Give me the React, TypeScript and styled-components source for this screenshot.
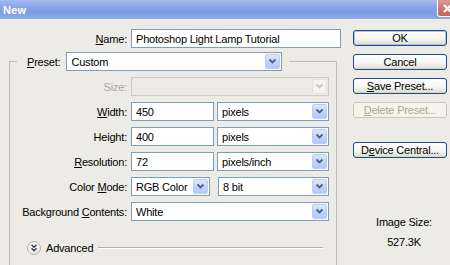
import React from "react";
import styled, { createGlobalStyle } from "styled-components";

const GlobalStyle = createGlobalStyle`
  html, body {
    margin: 0;
    padding: 0;
    width: 450px;
    height: 265px;
    overflow: hidden;
    background: #ecebe5;
  }
  body {
    font-family: "Liberation Sans", Arial, sans-serif;
    font-size: 11px;
    letter-spacing: -0.2px;
    color: #000;
  }
`;

const Window = styled.div`
  width: 450px;
  height: 265px;
  display: flex;
  flex-direction: column;
  overflow: hidden;
  background: #ecebe5;
`;

const TitleBar = styled.div`
  height: 19px;
  flex: none;
  display: flex;
  align-items: center;
  justify-content: space-between;
  overflow: hidden;
  padding-left: 3px;
  background: linear-gradient(180deg, #a3bbef 0%, #8aa5e8 35%, #7e9ce3 65%, #90aae9 100%);
`;

const Title = styled.span`
  color: #fff;
  font-weight: bold;
  font-size: 11px;
  letter-spacing: 0.2px;
`;

const CloseBox = styled.div`
  width: 21px;
  height: 17px;
  margin-right: -8px;
  align-self: flex-start;
  border: 1px solid #fff;
  border-top: none;
  border-radius: 0 0 0 3px;
  box-sizing: border-box;
  background: linear-gradient(180deg, #d99a90 0%, #c9776c 60%, #c06a60 100%);
  display: flex;
  align-items: center;
  justify-content: center;
`;

const Body = styled.div`
  flex: 1;
  display: flex;
  flex-direction: row;
  min-height: 0;
`;

const LeftCol = styled.div`
  width: 340px;
  flex: none;
  display: flex;
  flex-direction: column;
  padding-top: 10px;
`;

const Row = styled.div<{ $indent?: number }>`
  display: grid;
  grid-template-columns: 117px auto;
  column-gap: 4px;
  align-items: center;
  padding-left: ${(p) => p.$indent ?? 0}px;
  height: 19px;
`;

const Label = styled.label<{ $disabled?: boolean }>`
  text-align: right;
  white-space: nowrap;
  color: ${(p) => (p.$disabled ? "#aca899" : "#000")};
`;

const Fields = styled.div<{ $gap?: number }>`
  display: flex;
  gap: ${(p) => p.$gap ?? 3}px;
  align-items: center;
`;

const TextInput = styled.div<{ $w: number }>`
  width: ${(p) => p.$w}px;
  height: 19px;
  box-sizing: border-box;
  border: 1px solid #7f9db9;
  background: #fff;
  padding-left: 4px;
  display: flex;
  align-items: center;
  white-space: nowrap;
  overflow: hidden;
`;

const SelectBox = styled.div<{ $w: number; $disabled?: boolean }>`
  width: ${(p) => p.$w}px;
  height: 19px;
  box-sizing: border-box;
  border: 1px solid ${(p) => (p.$disabled ? "#cfcdc2" : "#7f9db9")};
  background: ${(p) => (p.$disabled ? "#ecebe5" : "#fff")};
  padding-left: 4px;
  display: flex;
  align-items: center;
  justify-content: space-between;
  white-space: nowrap;
  overflow: hidden;
`;

const ArrowBtn = styled.div<{ $disabled?: boolean }>`
  width: 15px;
  height: 15px;
  margin-right: 1px;
  box-sizing: border-box;
  border-radius: 2px;
  display: flex;
  align-items: center;
  justify-content: center;
  border: 1px solid ${(p) => (p.$disabled ? "#e3e2da" : "#bccdf5")};
  background: ${(p) =>
    p.$disabled
      ? "#f4f3ee"
      : "linear-gradient(180deg, #dde7fd 0%, #c3d4fb 50%, #b5c9f7 100%)"};
`;

const GroupBox = styled.fieldset`
  margin: 4px 0 0 9px;
  padding: 6px 0 0 0;
  width: 328px;
  box-sizing: border-box;
  flex: 1;
  border: 1px solid #c3bfae;
  border-bottom: none;
  display: flex;
  flex-direction: column;
  gap: 6px;
  min-width: 0;
`;

const Legend = styled.legend`
  margin-left: 7px;
  padding: 0 7px 0 10px;
  display: flex;
  align-items: center;
  gap: 6px;
  height: 19px;
`;

const AdvancedRow = styled.div`
  display: flex;
  align-items: center;
  margin-top: 13px;
  padding-left: 17px;
  padding-right: 13px;
  height: 15px;
`;

const AdvIcon = styled.div`
  width: 14px;
  height: 14px;
  box-sizing: border-box;
  border-radius: 50%;
  border: 1px solid #b3b1a6;
  background: radial-gradient(circle at 40% 35%, #ffffff 0%, #f1f0ea 55%, #d9d7cd 100%);
  display: flex;
  align-items: center;
  justify-content: center;
  margin-right: 5px;
`;

const Rule = styled.div`
  flex: 1;
  height: 1px;
  margin-left: 5px;
  background: #b9ad9e;
  border-bottom: 1px solid #fff;
`;

const RightCol = styled.div`
  width: 94px;
  flex: none;
  margin-left: 13px;
  padding-top: 11px;
  display: flex;
  flex-direction: column;
`;

const Button = styled.div<{ $default?: boolean; $disabled?: boolean; $top?: number }>`
  height: 16px;
  margin-top: ${(p) => p.$top ?? 8}px;
  box-sizing: border-box;
  border-radius: 3px;
  display: flex;
  align-items: center;
  justify-content: center;
  white-space: nowrap;
  border: 1px solid ${(p) => (p.$disabled ? "#c9c7ba" : "#1c4b86")};
  color: ${(p) => (p.$disabled ? "#aca899" : "#000")};
  background: ${(p) =>
    p.$disabled
      ? "#f5f4ea"
      : "linear-gradient(180deg, #ffffff 0%, #f6f6f2 55%, #e6e4da 85%, #d8d4c6 100%)"};
  box-shadow: ${(p) => (p.$default ? "inset 0 0 0 1px #a9c2f1" : "none")};
`;

const Info = styled.div`
  margin-top: 54px;
  text-align: center;
  line-height: 20px;
  padding-left: 8px;
`;

const Spacer = styled.span<{ $w: number }>`
  width: ${(p) => p.$w}px;
  flex: none;
`;

const Chevron = ({ disabled }: { disabled?: boolean }) => (
  <svg width="9" height="7" viewBox="0 0 9 7">
    <path
      d="M1.5 1.5 L4.5 4.5 L7.5 1.5"
      fill="none"
      stroke={disabled ? "#c9c7ba" : "#4d6185"}
      strokeWidth="1.8"
    />
  </svg>
);

const Select = ({ w, value, disabled }: { w: number; value?: string; disabled?: boolean }) => (
  <SelectBox $w={w} $disabled={disabled}>
    <span>{value}</span>
    <ArrowBtn $disabled={disabled}>
      <Chevron disabled={disabled} />
    </ArrowBtn>
  </SelectBox>
);

export default function App() {
  return (
    <>
      <GlobalStyle />
      <Window>
        <TitleBar>
          <Title>New</Title>
          <CloseBox>
            <svg width="11" height="11" viewBox="0 0 11 11">
              <path d="M2 2 L9 9 M9 2 L2 9" stroke="#fff" strokeWidth="2" />
            </svg>
          </CloseBox>
        </TitleBar>
        <Body>
          <LeftCol>
            <Row $indent={10}>
              <Label>
                <u>N</u>ame:
              </Label>
              <TextInput $w={210}>Photoshop Light Lamp Tutorial</TextInput>
            </Row>
            <GroupBox>
              <Legend>
                <Label>
                  <u>P</u>reset:
                </Label>
                <Select w={216} value="Custom" />
              </Legend>
              <Row>
                <Label $disabled>Size:</Label>
                <Select w={198} disabled />
              </Row>
              <Row>
                <Label>
                  <u>W</u>idth:
                </Label>
                <Fields>
                  <TextInput $w={83}>450</TextInput>
                  <Select w={112} value="pixels" />
                </Fields>
              </Row>
              <Row>
                <Label>
                  Hei<u>g</u>ht:
                </Label>
                <Fields>
                  <TextInput $w={83}>400</TextInput>
                  <Select w={112} value="pixels" />
                </Fields>
              </Row>
              <Row>
                <Label>
                  <u>R</u>esolution:
                </Label>
                <Fields>
                  <TextInput $w={83}>72</TextInput>
                  <Select w={112} value="pixels/inch" />
                </Fields>
              </Row>
              <Row>
                <Label>
                  Color <u>M</u>ode:
                </Label>
                <Fields $gap={8}>
                  <Select w={79} value="RGB Color" />
                  <Select w={111} value="8 bit" />
                </Fields>
              </Row>
              <Row>
                <Label>
                  Background <u>C</u>ontents:
                </Label>
                <Select w={198} value="White" />
              </Row>
              <AdvancedRow>
                <AdvIcon>
                  <svg width="8" height="8" viewBox="0 0 8 8">
                    <path
                      d="M1.5 0.8 L4 3.2 L6.5 0.8 M1.5 4.3 L4 6.7 L6.5 4.3"
                      fill="none"
                      stroke="#333"
                      strokeWidth="1.4"
                    />
                  </svg>
                </AdvIcon>
                <span>Advanced</span>
                <Rule />
              </AdvancedRow>
            </GroupBox>
          </LeftCol>
          <RightCol>
            <Button $default $top={0}>
              OK
            </Button>
            <Button>Cancel</Button>
            <Button>
              <u>S</u>ave Preset...
            </Button>
            <Button $disabled>
              <u>D</u>elete Preset...
            </Button>
            <Button $top={24}>
              D<u>e</u>vice Central...
            </Button>
            <Info>
              <div>Image Size:</div>
              <div>527.3K</div>
            </Info>
          </RightCol>
        </Body>
      </Window>
    </>
  );
}
